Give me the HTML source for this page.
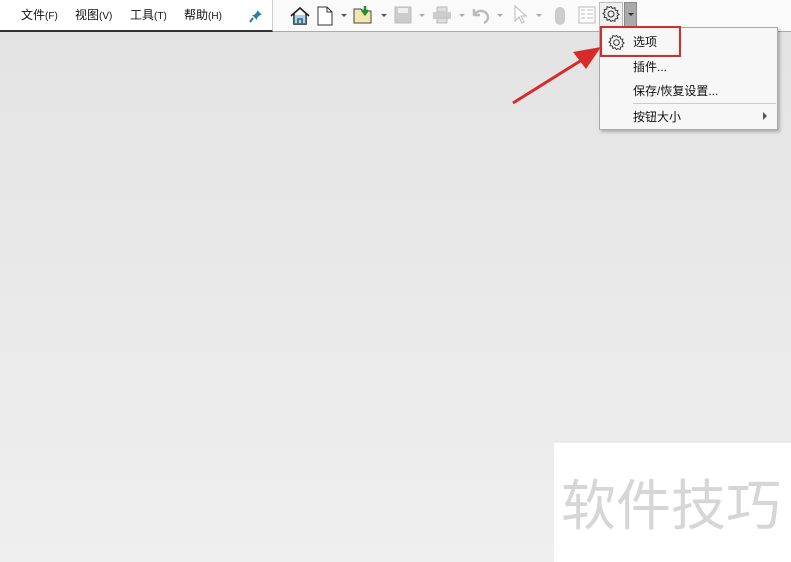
<!DOCTYPE html>
<html><head><meta charset="utf-8"><style>
*{margin:0;padding:0;box-sizing:border-box}
body{width:791px;height:562px;overflow:hidden;position:relative;background:linear-gradient(#e3e3e3,#efefef);font-family:"Liberation Sans","Noto Sans CJK SC",sans-serif;font-size:12px;color:#111}
.bar{position:absolute;left:0;top:0;width:791px;height:32px;background:#fafafa;border-bottom:1px solid #aaa}
.menu{position:absolute;left:0;top:0;width:273px;height:32px;background:#fff;border-bottom:2px solid #333;border-right:1px solid #ccc}
.menu span{position:absolute;top:6px;font-size:12px}
.menu small{font-size:10px}
.t{position:absolute}
.pop{position:absolute;left:599px;top:27px;width:179px;height:103px;background:#f7f7f7;border:1px solid #aaa;box-shadow:2px 2px 3px rgba(0,0,0,.25)}
.pop span{position:absolute;left:33px;font-size:12px}
.wm{position:absolute;left:554px;top:443px;width:237px;height:119px;background:#fff}
.wm div{position:absolute;left:7px;top:26px;font-size:55px;color:#d6d6d6;letter-spacing:0;font-family:"Noto Sans CJK SC",sans-serif;white-space:nowrap;line-height:64px}
</style></head><body>
<div class="bar"></div>
<div class="menu">
<span style="left:21px">文件<small>(F)</small></span>
<span style="left:75px">视图<small>(V)</small></span>
<span style="left:130px">工具<small>(T)</small></span>
<span style="left:184px">帮助<small>(H)</small></span>
<svg class="t" style="left:249px;top:9px" width="14" height="14" viewBox="0 0 14 14"><path d="M8 1l5 5-2 0-3 3 0 2-5-5 2 0 3-3z" fill="#2a7f9e"/><path d="M4 9l-3 4" stroke="#2a7f9e" stroke-width="2"/></svg>
</div>
<svg class="t" style="left:289px;top:5px" width="22" height="22" viewBox="0 0 22 22"><path d="M2 11L11 3l9 8M5 9v10h12V9M9 19v-5h4v5" fill="none" stroke="#222" stroke-width="1.6"/><path d="M5 10h12v9H5z" fill="#5aa8d8" opacity=".5"/></svg>
<svg class="t" style="left:317px;top:6px" width="16" height="20" viewBox="0 0 16 20"><path d="M1 1h9l5 5v13H1z" fill="#fff" stroke="#333"/><path d="M10 1v5h5" fill="none" stroke="#333"/></svg>
<div class="t" style="left:341px;top:14px;border:3px solid transparent;border-top:3px solid #555"></div>
<svg class="t" style="left:353px;top:5px" width="22" height="20" viewBox="0 0 22 20"><path d="M1 4h7l2 2h8v12H1z" fill="#f3e7b0" stroke="#444"/><path d="M12 1v7M9 5l3 4 3-4" stroke="#2a8a2a" stroke-width="2.5" fill="none"/></svg>
<div class="t" style="left:381px;top:14px;border:3px solid transparent;border-top:3px solid #555"></div>
<svg class="t" style="left:394px;top:6px" width="18" height="18"><rect x="1" y="1" width="16" height="16" fill="#ccc" stroke="#bbb"/><rect x="4" y="2" width="10" height="5" fill="#eee"/></svg>
<div class="t" style="left:419px;top:14px;border:3px solid transparent;border-top:3px solid #aaa"></div>
<svg class="t" style="left:432px;top:6px" width="20" height="18"><rect x="5" y="1" width="10" height="5" fill="#ddd" stroke="#bbb"/><rect x="1" y="6" width="18" height="7" fill="#ccc"/><rect x="5" y="12" width="10" height="5" fill="#ddd" stroke="#bbb"/></svg>
<div class="t" style="left:459px;top:14px;border:3px solid transparent;border-top:3px solid #aaa"></div>
<svg class="t" style="left:471px;top:6px" width="20" height="18"><path d="M3 3v6h6M4 8c3-5 12-4 13 3 0 3-2 5-4 6" fill="none" stroke="#bbb" stroke-width="2.5"/></svg>
<div class="t" style="left:497px;top:14px;border:3px solid transparent;border-top:3px solid #aaa"></div>
<svg class="t" style="left:513px;top:5px" width="16" height="20"><path d="M2 1v15l4-4 3 6 2-1-3-6h5z" fill="#fff" stroke="#bbb"/></svg>
<div class="t" style="left:536px;top:14px;border:3px solid transparent;border-top:3px solid #aaa"></div>
<div class="t" style="left:555px;top:7px;width:10px;height:18px;border-radius:5px;background:#ccc"></div>
<svg class="t" style="left:578px;top:6px" width="18" height="18"><rect x="1" y="1" width="16" height="16" fill="#fff" stroke="#bbb"/><path d="M3 4h4M3 8h4M3 12h4M9 4h6M9 8h6M9 12h6" stroke="#bbb"/></svg>
<div class="t" style="left:599px;top:2px;width:24px;height:25px;background:#f0f0f0;border:1px solid #bbb"></div>
<div class="t" style="left:624px;top:2px;width:13px;height:25px;background:#aaa;border:1px solid #888"></div>
<div class="t" style="left:628px;top:13px;border:3px solid transparent;border-top:3px solid #333"></div>
<svg class="t" style="left:602px;top:5px" width="18" height="18" viewBox="0 0 18 18"><path d="M9 1.5l1.5 2 2.4-.8.4 2.5 2.5.4-.8 2.4 2 1.5-2 1.5.8 2.4-2.5.4-.4 2.5-2.4-.8L9 16.5l-1.5-2-2.4.8-.4-2.5-2.5-.4.8-2.4-2-1.5 2-1.5-.8-2.4 2.5-.4.4-2.5 2.4.8z" fill="none" stroke="#333"/><circle cx="9" cy="9" r="3" fill="none" stroke="#333"/></svg>
<div class="pop">
<svg class="t" style="left:8px;top:6px" width="17" height="17" viewBox="0 0 18 18"><path d="M9 1.5l1.5 2 2.4-.8.4 2.5 2.5.4-.8 2.4 2 1.5-2 1.5.8 2.4-2.5.4-.4 2.5-2.4-.8L9 16.5l-1.5-2-2.4.8-.4-2.5-2.5-.4.8-2.4-2-1.5 2-1.5-.8-2.4 2.5-.4.4-2.5 2.4.8z" fill="none" stroke="#333"/><circle cx="9" cy="9" r="3" fill="none" stroke="#333"/></svg>
<span style="top:5px">选项</span>
<span style="top:30px">插件...</span>
<span style="top:54px">保存/恢复设置...</span>
<div class="t" style="left:33px;top:75px;width:143px;height:1px;background:#ccc"></div>
<span style="top:80px">按钮大小</span>
<div class="t" style="left:163px;top:84px;border:4px solid transparent;border-left:4px solid #555"></div>
</div>
<div class="t" style="left:600px;top:26px;width:81px;height:31px;border:2px solid #d82a2a"></div>
<svg class="t" style="left:505px;top:38px" width="100" height="70"><path d="M8 65L80 20" stroke="#d82a2a" stroke-width="3"/><path d="M96 9L68 14l13 17z" fill="#d82a2a"/></svg>
<div class="wm"><div>软件技巧</div></div>
</body></html>
